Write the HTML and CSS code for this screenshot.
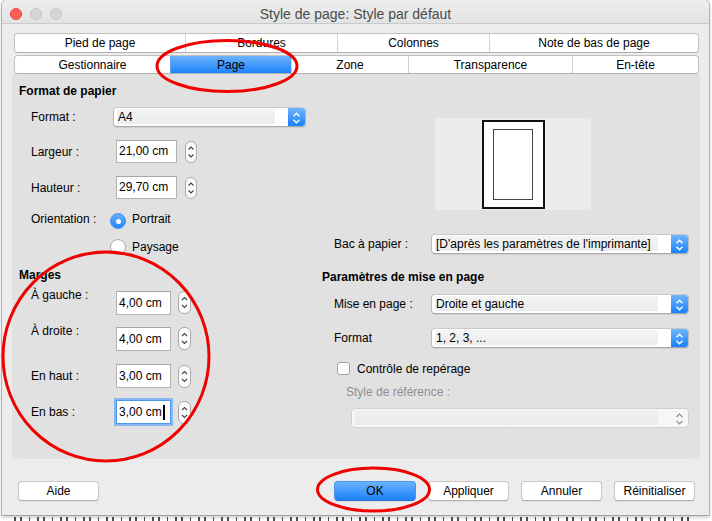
FILE: index.html
```html
<!DOCTYPE html>
<html lang="fr">
<head>
<meta charset="utf-8">
<title>Style de page</title>
<link rel="stylesheet" href="styles.css">
</head>
<body>
<div class="window">
  <div class="titlebar">
    <div class="lights"><span class="light red"></span><span class="light"></span><span class="light"></span></div>
    <div class="title">Style de page: Style par défaut</div>
    <div></div>
  </div>
  <div class="tabs">
    <div class="tabrow row1">
      <div class="tab">Pied de page</div>
      <div class="tab">Bordures</div>
      <div class="tab">Colonnes</div>
      <div class="tab">Note de bas de page</div>
    </div>
    <div class="tabrow row2">
      <div class="tab">Gestionnaire</div>
      <div class="tab sel">Page</div>
      <div class="tab">Zone</div>
      <div class="tab">Transparence</div>
      <div class="tab">En-tête</div>
    </div>
  </div>
  <div class="panel">
    <div class="col left">
      <div class="heading">Format de papier</div>
      <div class="row r-format">
        <span class="lab">Format :</span>
        <div class="select w-a4"><span class="field">A4</span><span class="arrow"><svg width="17" height="20" viewBox="0 0 17 20"><path d="M5.5 8.2 L8.5 5.2 L11.5 8.2 M5.5 11.8 L8.5 14.8 L11.5 11.8" fill="none" stroke="#fff" stroke-width="1.4"/></svg></span></div>
      </div>
      <div class="row r-size">
        <span class="lab">Largeur :</span>
        <div class="input">21,00 cm</div>
        <span class="spin"><svg width="12" height="22" viewBox="0 0 12 22"><path d="M3.5 8.5 L6 6 L8.5 8.5 M3.5 13.5 L6 16 L8.5 13.5" fill="none" stroke="#444" stroke-width="1.1"/></svg></span>
      </div>
      <div class="row r-size">
        <span class="lab">Hauteur :</span>
        <div class="input">29,70 cm</div>
        <span class="spin"><svg width="12" height="22" viewBox="0 0 12 22"><path d="M3.5 8.5 L6 6 L8.5 8.5 M3.5 13.5 L6 16 L8.5 13.5" fill="none" stroke="#444" stroke-width="1.1"/></svg></span>
      </div>
      <div class="row r-orient">
        <span class="lab">Orientation :</span>
        <span class="radio on"></span><span class="rlab">Portrait</span>
      </div>
      <div class="row r-pays">
        <span class="radio"></span><span class="rlab">Paysage</span>
      </div>
      <div class="heading h-marges">Marges</div>
      <div class="row r-mtop r-first">
        <span class="lab">À gauche :</span>
        <div class="input m">4,00 cm</div>
        <span class="spin m"><svg width="13" height="23" viewBox="0 0 13 23"><path d="M4 9 L6.5 6.5 L9 9 M4 14 L6.5 16.5 L9 14" fill="none" stroke="#444" stroke-width="1.1"/></svg></span>
      </div>
      <div class="row r-mtop r-second">
        <span class="lab">À droite :</span>
        <div class="input m">4,00 cm</div>
        <span class="spin m"><svg width="13" height="23" viewBox="0 0 13 23"><path d="M4 9 L6.5 6.5 L9 9 M4 14 L6.5 16.5 L9 14" fill="none" stroke="#444" stroke-width="1.1"/></svg></span>
      </div>
      <div class="row r-mc">
        <span class="lab">En haut :</span>
        <div class="input m">3,00 cm</div>
        <span class="spin m"><svg width="13" height="23" viewBox="0 0 13 23"><path d="M4 9 L6.5 6.5 L9 9 M4 14 L6.5 16.5 L9 14" fill="none" stroke="#444" stroke-width="1.1"/></svg></span>
      </div>
      <div class="row r-mc">
        <span class="lab">En bas :</span>
        <div class="input m focus">3,00 cm<span class="caret"></span></div>
        <span class="spin m"><svg width="13" height="23" viewBox="0 0 13 23"><path d="M4 9 L6.5 6.5 L9 9 M4 14 L6.5 16.5 L9 14" fill="none" stroke="#444" stroke-width="1.1"/></svg></span>
      </div>
    </div>
    <div class="col right">
      <div class="preview"><div class="page"><div class="inner"></div></div></div>
      <div class="row r-bac">
        <span class="lab2">Bac à papier :</span>
        <div class="select w-r"><span class="field">[D'après les paramètres de l'imprimante]</span><span class="arrow"><svg width="17" height="20" viewBox="0 0 17 20"><path d="M5.5 8.2 L8.5 5.2 L11.5 8.2 M5.5 11.8 L8.5 14.8 L11.5 11.8" fill="none" stroke="#fff" stroke-width="1.4"/></svg></span></div>
      </div>
      <div class="heading h-param">Paramètres de mise en page</div>
      <div class="row r-mise">
        <span class="lab2">Mise en page :</span>
        <div class="select w-r"><span class="field">Droite et gauche</span><span class="arrow"><svg width="17" height="20" viewBox="0 0 17 20"><path d="M5.5 8.2 L8.5 5.2 L11.5 8.2 M5.5 11.8 L8.5 14.8 L11.5 11.8" fill="none" stroke="#fff" stroke-width="1.4"/></svg></span></div>
      </div>
      <div class="row r-fmt">
        <span class="lab2">Format</span>
        <div class="select w-r"><span class="field">1, 2, 3, ...</span><span class="arrow"><svg width="17" height="20" viewBox="0 0 17 20"><path d="M5.5 8.2 L8.5 5.2 L11.5 8.2 M5.5 11.8 L8.5 14.8 L11.5 11.8" fill="none" stroke="#fff" stroke-width="1.4"/></svg></span></div>
      </div>
      <div class="row r-check">
        <span class="check"></span><span class="clab">Contrôle de repérage</span>
      </div>
      <div class="disabled-lab">Style de référence :</div>
      <div class="select dis"><span class="field"></span><span class="arrow"><svg width="17" height="20" viewBox="0 0 17 20"><path d="M5.5 8.2 L8.5 5.2 L11.5 8.2 M5.5 11.8 L8.5 14.8 L11.5 11.8" fill="none" stroke="#888" stroke-width="1.2"/></svg></span></div>
    </div>
  </div>
  <div class="buttons">
    <div class="btn">Aide</div>
    <div class="btn-group">
      <div class="btn ok">OK</div>
      <div class="btn">Appliquer</div>
      <div class="btn">Annuler</div>
      <div class="btn">Réinitialiser</div>
    </div>
  </div>
</div>
<div class="doc" aria-hidden="true"></div>
<svg class="marks" width="712" height="521" viewBox="0 0 712 521">
  <ellipse cx="227" cy="66" rx="70" ry="25.5" fill="none" stroke="#f00000" stroke-width="3"/>
  <ellipse cx="106" cy="356.5" rx="103" ry="104.5" fill="none" stroke="#f00000" stroke-width="3"/>
  <ellipse cx="373.5" cy="489.5" rx="56" ry="21.5" fill="none" stroke="#f00000" stroke-width="3"/>
</svg>
</body>
</html>
```
FILE: styles.css
```css
html, body {
  margin: 0;
  padding: 0;
}
body {
  width: 712px;
  height: 521px;
  overflow: hidden;
  background: #fff;
  font-family: "Liberation Sans", Arial, sans-serif;
  font-size: 12px;
  color: #000;
  position: relative;
}
.window {
  margin-left: 2px;
  width: 707px;
  height: 515px;
  box-sizing: border-box;
  background: #ececec;
  border-radius: 5px 5px 0 0;
  box-shadow: 0 0 0 1px rgba(0,0,0,0.22), 0 2px 4px rgba(0,0,0,0.25);
  display: flex;
  flex-direction: column;
  position: relative;
}
.titlebar {
  height: 24px;
  box-sizing: border-box;
  border-bottom: 1px solid #c9c9c9;
  background: linear-gradient(#eeeeee, #e2e2e2);
  border-radius: 5px 5px 0 0;
  display: grid;
  grid-template-columns: 1fr auto 1fr;
  align-items: center;
}
.lights {
  display: flex;
  gap: 8px;
  padding-left: 8px;
  padding-top: 4px;
}
.light {
  width: 12px;
  height: 12px;
  box-sizing: border-box;
  border-radius: 50%;
  background: #d5d5d5;
  border: 1px solid #c6c6c6;
}
.light.red {
  background: #fc5f57;
  border-color: #df4640;
}
.title {
  font-size: 14px;
  color: #4b4b4b;
  padding-top: 4px;
}
.tabs {
  margin: 9px 10px 0 12px;
}
.tabrow {
  display: grid;
  background: #fff;
  border: 1px solid #c2c2c2;
  border-bottom-color: #b0b0b0;
  border-radius: 4px;
  overflow: hidden;
  box-sizing: border-box;
}
.row1 {
  height: 20px;
  grid-template-columns: 170px 152px 152px 1fr;
}
.row2 {
  margin-top: 2px;
  height: 19px;
  grid-template-columns: 155px 121px 117px 164px 1fr;
}
.tab {
  text-align: center;
  border-left: 1px solid #d2d2d2;
  line-height: 19px;
  white-space: nowrap;
}
.row2 .tab {
  line-height: 18px;
}
.tab:first-child {
  border-left: none;
}
.tab.sel {
  border-left-color: #5a9ef5;
  background: linear-gradient(#6cb2fa, #1a80fb);
}
.panel {
  margin: 0 9px 0 10px;
  height: 385px;
  box-sizing: border-box;
  background: #e1e1e1;
  border-radius: 0 0 5px 5px;
  display: grid;
  grid-template-columns: 310px 1fr;
  padding-top: 9px;
}
.col.left {
  padding-left: 7px;
}
.heading {
  font-weight: bold;
  line-height: 16px;
  height: 16px;
}
.row {
  display: flex;
  align-items: center;
}
.col.left .row {
  padding-left: 12px;
}
.lab {
  width: 79px;
  flex: none;
  white-space: nowrap;
}
.r-format {
  margin-top: 8px;
  height: 20px;
}
.r-format .select {
  margin-left: 3px;
}
.select {
  display: flex;
  height: 20px;
  box-sizing: border-box;
  border: 1px solid #b9b9b9;
  border-top-color: #c8c8c8;
  border-bottom-color: #a9a9a9;
  border-radius: 4px;
  background: #fff;
  overflow: hidden;
  box-shadow: 0 1px 1px rgba(0,0,0,0.08);
}
.select .field {
  flex: 1;
  margin: 1px 13px 2px 3px;
  padding-left: 1px;
  background: linear-gradient(#f4f4f4, #ececec);
  line-height: 16px;
  white-space: nowrap;
  overflow: hidden;
}
.select .arrow {
  width: 17px;
  flex: none;
  background: linear-gradient(#6fb5fb, #1a81fb);
  display: flex;
}
.w-a4 {
  width: 193px;
}
.w-r {
  width: 258px;
}
.r-size {
  margin-top: 13px;
  height: 23px;
}
.input {
  margin-left: 6px;
  width: 61px;
  height: 23px;
  box-sizing: border-box;
  background: #fff;
  border: 1px solid #b3b3b3;
  border-top-color: #a6a6a6;
  padding-left: 2px;
  line-height: 21px;
  white-space: nowrap;
  flex: none;
}
.spin {
  margin-left: 8px;
  width: 12px;
  height: 22px;
  box-sizing: border-box;
  border: 1px solid #a9a9a9;
  border-radius: 6px;
  background: #fbfbfb;
  display: flex;
  align-items: center;
  justify-content: center;
  flex: none;
  overflow: hidden;
}
.spin svg {
  flex: none;
}
.input.m {
  width: 55px;
  height: 24px;
  line-height: 22px;
}
.spin.m {
  margin-left: 7px;
  width: 13px;
  height: 23px;
}
.r-orient {
  margin-top: 14px;
  height: 16px;
  align-items: flex-start;
}
.r-orient .lab {
  line-height: 13px;
}
.r-pays {
  margin-top: 10px;
  height: 16px;
}
.col.left .r-pays {
  padding-left: 91px;
}
.radio {
  width: 16px;
  height: 16px;
  box-sizing: border-box;
  border-radius: 50%;
  background: #fff;
  border: 1px solid #a9a9a9;
  flex: none;
  display: flex;
  align-items: center;
  justify-content: center;
}
.radio.on {
  border-color: #3d8ef2;
  background: linear-gradient(#67aefa, #2486fb);
}
.radio.on::after {
  content: "";
  width: 5px;
  height: 5px;
  border-radius: 50%;
  background: #fff;
}
.rlab {
  margin-left: 6px;
  line-height: 14px;
}
.r-orient .rlab {
  line-height: 12px;
}
.h-marges {
  margin-top: 12px;
}
.r-mtop {
  align-items: flex-start;
  height: 28px;
}
.r-mtop .lab {
  line-height: 16px;
}
.r-mtop .input,
.r-mtop .spin {
  margin-top: 4px;
}
.r-first {
  margin-top: 4px;
}
.r-second {
  margin-top: 8px;
}
.r-mc {
  margin-top: 13px;
  height: 24px;
}
.r-mc + .r-mc {
  margin-top: 12px;
}
.input.focus {
  border: 1px solid #4f95ec;
  box-shadow: 0 0 0 2px #86b6f3;
  display: flex;
  align-items: center;
}
.caret {
  display: inline-block;
  width: 2px;
  height: 15px;
  background: #000;
  margin-left: 1px;
}
.col.right {
  display: flex;
  flex-direction: column;
}
.preview {
  margin-top: 35px;
  margin-left: 113px;
  width: 156px;
  height: 92px;
  background: #ebebeb;
  box-sizing: border-box;
  padding: 2px 0 0 47px;
}
.page {
  width: 63px;
  height: 89px;
  box-sizing: border-box;
  background: #fff;
  border: 2px solid #111;
  padding: 7px 0 0 9px;
}
.inner {
  width: 40px;
  height: 71px;
  box-sizing: border-box;
  border: 1px solid #444;
  background: #fff;
}
.col.right .row {
  padding-left: 12px;
}
.lab2 {
  width: 97px;
  flex: none;
  white-space: nowrap;
}
.r-bac {
  margin-top: 24px;
  height: 20px;
}
.h-param {
  margin-top: 15px;
}
.r-mise {
  margin-top: 9px;
  height: 20px;
}
.r-fmt {
  margin-top: 14px;
  height: 20px;
}
.col.right .r-check {
  margin-top: 14px;
  height: 13px;
  padding-left: 15px;
}
.check {
  width: 13px;
  height: 13px;
  box-sizing: border-box;
  border: 1px solid #a4a4a4;
  border-radius: 3px;
  background: #fff;
  flex: none;
}
.clab {
  margin-left: 7px;
  line-height: 14px;
}
.disabled-lab {
  margin-top: 9px;
  padding-left: 24px;
  line-height: 16px;
  color: #8f8f8f;
}
.select.dis {
  margin-top: 8px;
  margin-left: 29px;
  width: 338px;
  border-color: #cfcfcf;
  background: #f7f7f7;
  box-shadow: none;
}
.select.dis .field {
  background: linear-gradient(#f0f0f0, #ebebeb);
}
.select.dis .arrow {
  background: none;
}
.buttons {
  margin-top: 22px;
  padding: 0 14px 0 16px;
  display: flex;
  justify-content: space-between;
}
.btn-group {
  display: flex;
  gap: 11px;
}
.btn {
  width: 81px;
  height: 20px;
  box-sizing: border-box;
  background: #fff;
  border: 1px solid #c6c6c6;
  border-bottom-color: #adadad;
  border-radius: 4px;
  box-shadow: 0 1px 1px rgba(0,0,0,0.06);
  text-align: center;
  line-height: 18px;
  white-space: nowrap;
}
.btn.ok {
  width: 82px;
  border-color: #4c92ef;
  border-bottom-color: #2a72e0;
  background: linear-gradient(#6cb3fa, #1a81fb);
}
.btn-group .btn + .btn {
  margin-left: 1px;
}
.doc {
  margin-top: 2px;
  margin-left: 14px;
  height: 4px;
  width: 680px;
  background: repeating-linear-gradient(90deg, #222 0 2px, transparent 2px 6px, #222 6px 8px, transparent 8px 15px, #222 15px 16px, transparent 16px 23px);
  opacity: 0.8;
}
.marks {
  position: absolute;
  left: 0;
  top: 0;
  pointer-events: none;
}
```
